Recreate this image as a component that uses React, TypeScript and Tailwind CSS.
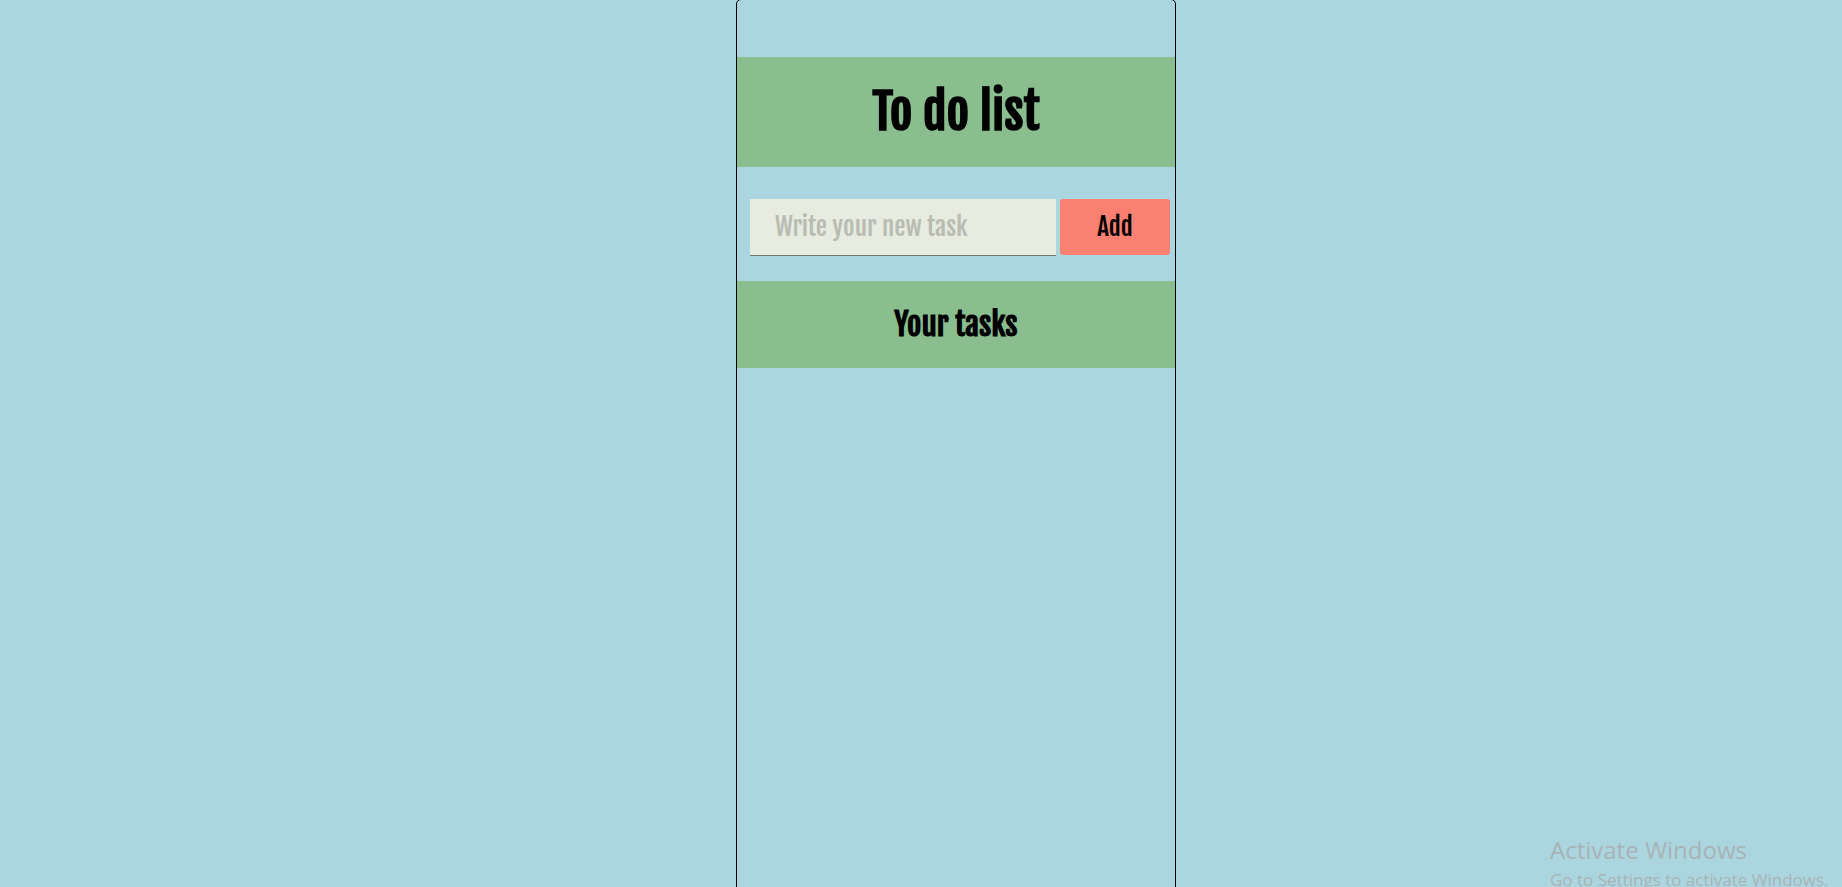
export default function App() {
  return (
    <div className="relative grid h-screen grid-cols-[736fr_minmax(auto,440px)_666fr] grid-rows-1 overflow-hidden bg-[#abd6df] font-['Fjalla_One','Roboto_Condensed',sans-serif] text-black">
      <main className="col-start-2 -mt-px -mb-2 rounded-[5px] border border-black pt-[57px]">
        <header className="bg-[#8abe8f] py-6">
          <h1 className="text-center text-[49px] leading-[62px] font-bold">To do list</h1>
        </header>
        <form
          className="flex items-start gap-1 pt-8 pr-[5px] pb-[25px] pl-[13px]"
          onSubmit={(event) => event.preventDefault()}
        >
          <input
            type="text"
            aria-label="New task"
            placeholder="Write your new task"
            className="h-[57px] min-w-0 flex-1 border-b border-[#767676] bg-[#e7ebe0] px-[25px] pb-0.5 text-[25px] outline-none placeholder:text-[#b8bcb3]"
          />
          <button type="submit" className="h-14 w-[110px] rounded-[3px] bg-[#fa8072] text-[25px]">
            Add
          </button>
        </form>
        <section>
          <h2 className="bg-[#8abe8f] py-6 text-center text-[31px] leading-[39px] font-bold">Your tasks</h2>
        </section>
      </main>
      <aside className="absolute top-[834px] left-[1550px] font-['Open_Sans',sans-serif] whitespace-nowrap text-[#a7b3b6]">
        <p className="text-2xl leading-8">Activate Windows</p>
        <p className="text-[17px] leading-7">Go to Settings to activate Windows.</p>
      </aside>
    </div>
  );
}
